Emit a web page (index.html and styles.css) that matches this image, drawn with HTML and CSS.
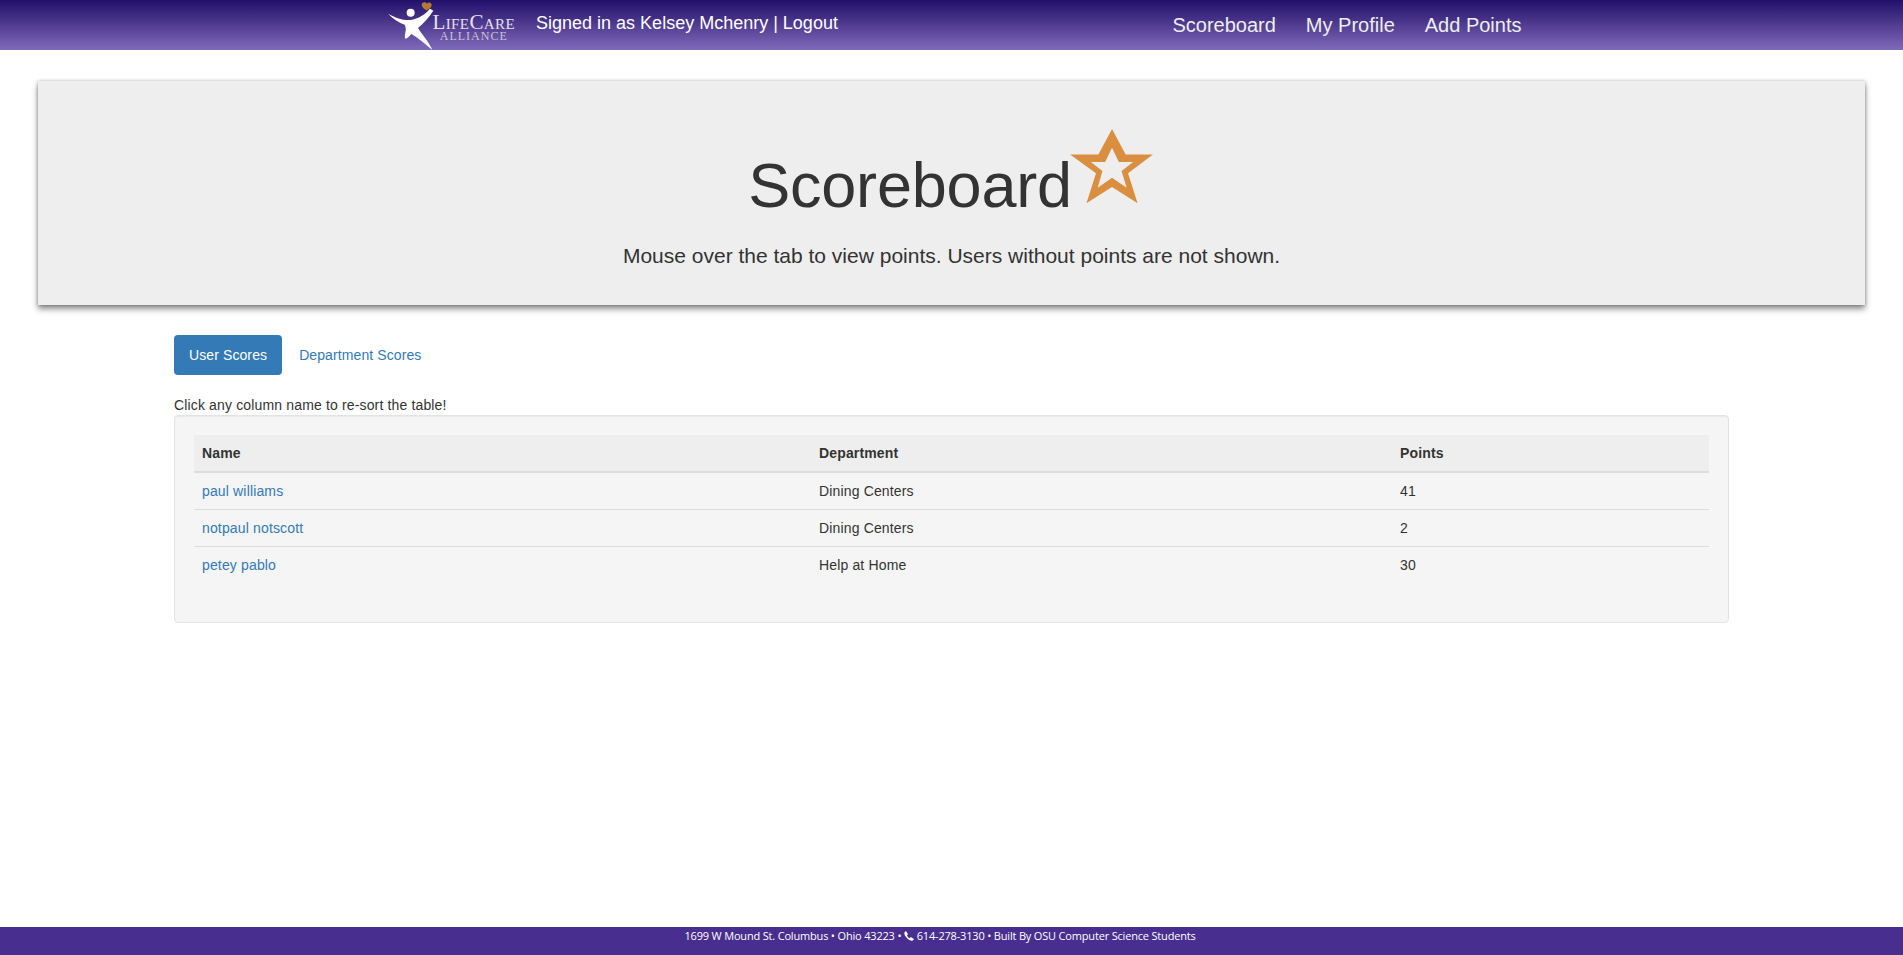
FILE: index.html
```html
<!DOCTYPE html>
<html lang="en">

<head>
    <meta charset="UTF-8">
    <meta name="viewport" content="width=device-width, initial-scale=1">
    <title>Scoreboard</title>
    <link rel="stylesheet" href="styles.css">
</head>

<body>

    <nav class="navbar">
        <div class="navbar-inner">
            <a class="brand" href="#">
                <svg class="brand-figure" viewBox="0 0 165 156" aria-hidden="true">
                    <path fill="#b57a30" d="M125 14C127 5 137 5 141 11C146 5 155 8 155 15C155 23 146 28 139 31C133 27 125 22 125 14Z" />
                    <circle fill="#fff" cx="92" cy="38" r="12" />
                    <path fill="#fff" d="M24 41C48 54 66 60 84 60C104 60 130 50 150 26L160 32C146 54 128 72 114 84C124 102 146 124 157 150C136 132 112 112 94 102C88 110 82 116 76 116C74 112 74 106 76 98C78 90 78 82 74 74C58 68 38 56 24 41Z" />
                </svg>
                <span class="brand-text">
                    <span class="brand-name">LifeCare</span>
                    <span class="brand-sub">Alliance</span>
                </span>
            </a>
            <p class="signed-in">Signed in as Kelsey Mchenry | <a href="#">Logout</a></p>
            <ul class="nav-links">
                <li><a href="#">Scoreboard</a></li>
                <li><a href="#">My Profile</a></li>
                <li><a href="#">Add Points</a></li>
            </ul>
        </div>
    </nav>

    <header class="jumbotron">
        <h1>Scoreboard<svg class="star" viewBox="0 0 243 220" aria-hidden="true">
                <path fill="#d98f3f" fill-rule="evenodd" d="M123 0L163 75H243L170 130L198 218L123 170L48 218L76 130L0 75H83ZM123 55L103 97H61L95 123L81 172L123 143L166 172L151 123L185 97H143Z" />
            </svg></h1>
        <p>Mouse over the tab to view points. Users without points are not shown.</p>
    </header>

    <main class="container">
        <ul class="pills">
            <li class="active"><a href="#">User Scores</a></li>
            <li><a href="#">Department Scores</a></li>
        </ul>

        <p class="hint">Click any column name to re-sort the table!</p>

        <div class="well">
            <table class="scores">
                <thead>
                    <tr>
                        <th class="col-name">Name</th>
                        <th class="col-dept">Department</th>
                        <th>Points</th>
                    </tr>
                </thead>
                <tbody>
                    <tr>
                        <td><a href="#">paul williams</a></td>
                        <td>Dining Centers</td>
                        <td>41</td>
                    </tr>
                    <tr>
                        <td><a href="#">notpaul notscott</a></td>
                        <td>Dining Centers</td>
                        <td>2</td>
                    </tr>
                    <tr>
                        <td><a href="#">petey pablo</a></td>
                        <td>Help at Home</td>
                        <td>30</td>
                    </tr>
                </tbody>
            </table>
        </div>
    </main>

    <footer class="footer">
        1699 W Mound St. Columbus &bull; Ohio 43223 &bull;
        <svg class="phone" viewBox="0 0 16 16" aria-hidden="true">
            <path fill="#fff" d="M3.6 0.6L6 4.4C6.3 4.9 6.2 5.5 5.7 5.9L4.7 6.7C5.4 8.6 7 10.4 9 11.4L10 10.3C10.4 9.9 11 9.8 11.5 10.1L15.2 12.4C15.7 12.7 15.8 13.3 15.4 13.8C14.4 15 13 15.8 11.6 15.4C6.8 14.2 1.6 9 0.6 4.2C0.3 2.8 1.2 1.4 2.4 0.5C2.8 0.2 3.3 0.2 3.6 0.6Z" />
        </svg>
        614-278-3130 &bull; Built By OSU Computer Science Students
    </footer>

</body>

</html>
```

FILE: styles.css
```css
* {
    box-sizing: border-box;
}

body {
    font-family: "Liberation Sans", Arial, sans-serif;
    font-size: 14px;
    line-height: 1.42857;
    color: #333;
    background-color: #fff;
    margin: 0;
    min-height: 100vh;
    display: flex;
    flex-direction: column;
}

a {
    color: #337ab7;
    text-decoration: none;
}

/* top bar */
.navbar {
    height: 50px;
    flex-shrink: 0;
    background: linear-gradient(to bottom, #21106a 0%, #8069b8 100%);
}

.navbar-inner {
    width: 1170px;
    height: 50px;
    margin: 0 auto;
    display: flex;
    align-items: center;
}

.brand {
    display: flex;
    align-items: flex-start;
    margin-left: 13px;
    height: 50px;
}

.brand-figure {
    width: 55px;
    height: 52px;
    flex-shrink: 0;
}

.brand-text {
    display: flex;
    flex-direction: column;
    align-items: center;
    font-family: "Liberation Serif", "Times New Roman", serif;
    margin: 14px 0 0 -2px;
    line-height: 1;
}

.brand-name {
    font-size: 21px;
    font-variant: small-caps;
    letter-spacing: 0.4px;
    line-height: 17px;
    color: #e4e0ef;
}

.brand-sub {
    font-size: 12px;
    text-transform: uppercase;
    letter-spacing: 1px;
    line-height: 11px;
    color: #c9c4d8;
}

.signed-in {
    margin: -3px 0 0 21px;
    font-size: 18px;
    color: #fff;
}

.signed-in a {
    color: #fff;
}

.nav-links {
    list-style: none;
    display: flex;
    margin: 0 0 0 auto;
    padding: 0;
}

.nav-links a {
    display: block;
    padding: 0 15px;
    font-size: 20px;
    color: #eee;
}

/* page heading */
.jumbotron {
    margin: 31px 38px 0;
    height: 224px;
    flex-shrink: 0;
    padding-top: 48px;
    text-align: center;
    background-color: #eee;
    box-shadow: 0 4px 6px rgba(0, 0, 0, 0.45), 0 0 3px rgba(0, 0, 0, 0.25);
}

.jumbotron h1 {
    margin: 0 0 33px;
    font-size: 63px;
    font-weight: 400;
    line-height: 69px;
    height: 79px;
    letter-spacing: -0.2px;
}

.star {
    width: 83px;
    height: 75px;
    margin: 0 2px 3px -2px;
}

.jumbotron p {
    margin: 0;
    font-size: 21px;
    line-height: 30px;
}

/* tabs and table */
.container {
    flex: 1;
    width: 1555px;
    margin: 30px auto 0;
    letter-spacing: 0.15px;
}

.pills {
    list-style: none;
    display: flex;
    gap: 2px;
    margin: 0;
    padding: 0;
    letter-spacing: 0.1px;
}

.pills a {
    display: block;
    padding: 11px 15px 9px;
    border-radius: 4px;
}

.pills .active a {
    color: #fff;
    background-color: #337ab7;
}

.hint {
    margin: 21px 0 -1px;
}

.well {
    padding: 19px;
    margin-top: 0;
    background-color: #f5f5f5;
    border: 1px solid #e3e3e3;
    border-radius: 4px;
    box-shadow: inset 0 1px 1px rgba(0, 0, 0, 0.05);
}

.scores {
    width: 100%;
    margin-bottom: 20px;
    border-collapse: collapse;
    table-layout: fixed;
}

.scores th,
.scores td {
    padding: 9px 8px 7px;
    text-align: left;
    vertical-align: top;
}

.scores th {
    background-color: #eee;
    border-bottom: 2px solid #ddd;
}

.scores td {
    border-top: 1px solid #ddd;
}

.scores tbody tr:first-child td {
    border-top: 0;
}

.col-name {
    width: 617px;
}

.col-dept {
    width: 581px;
}

/* footer */
.footer {
    height: 28px;
    flex-shrink: 0;
    padding-right: 23px;
    text-align: center;
    font-family: "Open Sans", sans-serif;
    font-size: 11px;
    line-height: 18px;
    letter-spacing: -0.18px;
    color: #fff;
    background-color: #482e8f;
}

.phone {
    width: 10px;
    height: 10px;
    vertical-align: -1px;
}
```
